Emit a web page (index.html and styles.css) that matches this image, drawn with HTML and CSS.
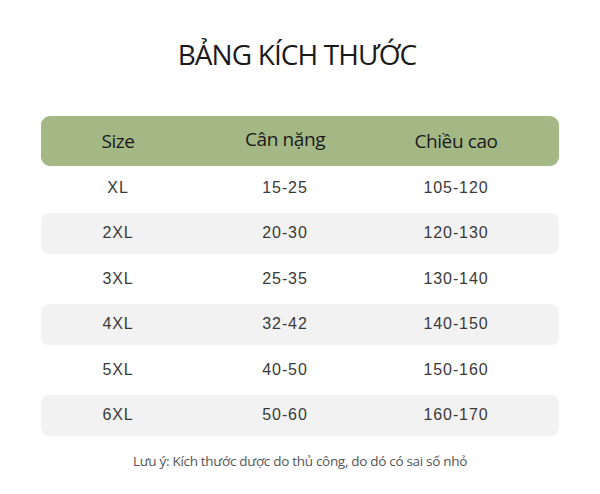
FILE: index.html
```html
<!DOCTYPE html>
<html lang="vi">
<head>
<meta charset="utf-8">
<title>Bảng kích thước</title>
<link rel="stylesheet" href="styles.css">
</head>
<body>
<div class="page">
  <h1 class="title">BẢNG KÍCH THƯỚC</h1>
  <div class="table">
    <div class="row head">
      <div class="cell">Size</div>
      <div class="cell up">Cân nặng</div>
      <div class="cell">Chiều cao</div>
    </div>
    <div class="row first">
      <div class="cell">XL</div><div class="cell">15-25</div><div class="cell">105-120</div>
    </div>
    <div class="row alt">
      <div class="cell">2XL</div><div class="cell">20-30</div><div class="cell">120-130</div>
    </div>
    <div class="row">
      <div class="cell">3XL</div><div class="cell">25-35</div><div class="cell">130-140</div>
    </div>
    <div class="row alt">
      <div class="cell">4XL</div><div class="cell">32-42</div><div class="cell">140-150</div>
    </div>
    <div class="row">
      <div class="cell">5XL</div><div class="cell">40-50</div><div class="cell">150-160</div>
    </div>
    <div class="row alt">
      <div class="cell">6XL</div><div class="cell">50-60</div><div class="cell">160-170</div>
    </div>
  </div>
  <p class="note">Lưu ý: Kích thước dược do thủ công, do dó có sai số nhỏ</p>
</div>
</body>
</html>
```
FILE: styles.css
```css
html, body {
  margin: 0;
  padding: 0;
  background: #ffffff;
}
.page {
  width: 600px;
  height: 494px;
  padding-top: 36px;
  box-sizing: border-box;
  font-family: "Open Sans", "Noto Sans", sans-serif;
}
.title {
  margin: 0;
  text-align: center;
  font-size: 28px;
  line-height: 36px;
  font-weight: 400;
  color: #1a1a1a;
  letter-spacing: -0.9px;
  padding-right: 6px;
}
.table {
  margin: 44px 41px 0 41px;
  display: flex;
  flex-direction: column;
  gap: 4px;
}
.row {
  display: grid;
  grid-template-columns: 154px 180px 162px;
  align-items: center;
  height: 41.5px;
  border-radius: 8px;
  font-family: "Liberation Sans", Arial, sans-serif;
  font-size: 16px;
  letter-spacing: 0.9px;
  color: #3a3a3a;
}
.row .cell {
  text-align: center;
}
.row.head {
  height: 50px;
  background: #a4b886;
  font-family: "Open Sans", "Noto Sans", sans-serif;
  font-size: 19px;
  letter-spacing: -0.4px;
  color: #1a1a1a;
  border-radius: 9px;
}
.row.head .up {
  position: relative;
  top: -2px;
}
.row.first {
  margin-top: -3px;
}
.row.alt {
  background: #f2f2f2;
}
.note {
  margin: 16px 0 0 0;
  text-align: center;
  font-size: 13.5px;
  color: #555555;
  letter-spacing: -0.3px;
}
```
